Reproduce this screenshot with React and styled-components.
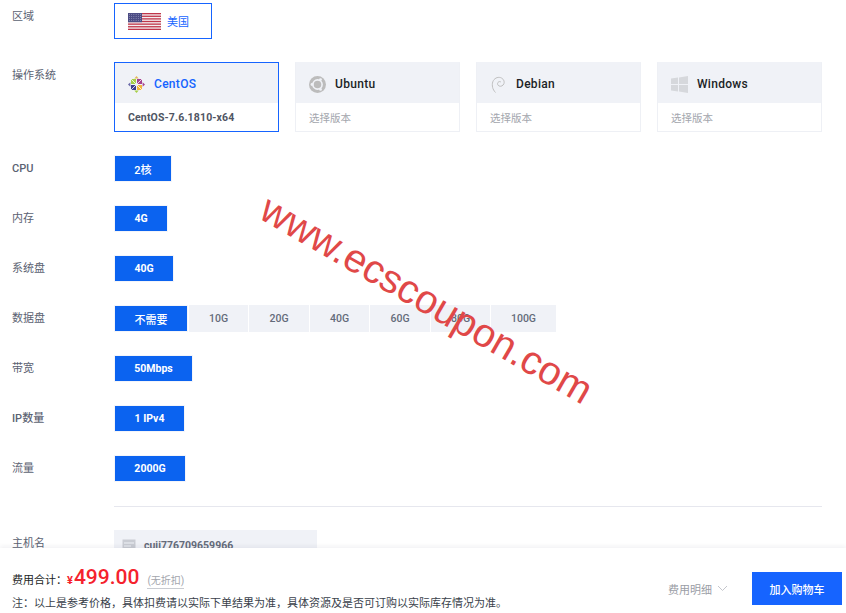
import React from "react";
import styled, { createGlobalStyle } from "styled-components";

const FONT = `Roboto, "Noto Sans CJK SC", sans-serif`;

const Global = createGlobalStyle`
  html, body { margin: 0; padding: 0; background: #fff; height: 613px; overflow: hidden; }
  * { box-sizing: border-box; }
  body { font-family: ${FONT}; }
`;

const Page = styled.div`
  position: relative;
  width: 846px;
  height: 613px;
  overflow: hidden;
  padding: 3px 24px 0 12px;
`;

const Row = styled.div`
  display: flex;
  align-items: flex-start;
  margin-bottom: ${(p) => p.$gap}px;
`;

const Label = styled.div`
  width: 102px;
  flex: none;
  padding-top: 6px;
  font-size: 11px;
  font-weight: ${(p) => (p.$latin ? 500 : 400)};
  line-height: 16px;
  color: #5b6272;
`;

const RegionButton = styled.div`
  width: 98px;
  height: 36px;
  border: 1px solid #1664ff;
  display: flex;
  align-items: center;
  padding-left: 13px;
  gap: 6px;
  color: #1664ff;
  font-size: 11px;
`;

const OsGrid = styled.div`
  display: flex;
  gap: 16px;
`;

const OsCard = styled.div`
  width: 165px;
  height: 70px;
  display: flex;
  flex-direction: column;
  border: 1px solid ${(p) => (p.$active ? "#1664ff" : "#eef0f5")};
  border-top-color: ${(p) => (p.$active ? "#1664ff" : "#f0f2f7")};
`;

const OsHead = styled.div`
  height: 40px;
  flex: none;
  background: #f0f2f7;
  display: flex;
  align-items: center;
  padding: 2px 0 0 13px;
  gap: 9px;
  font-size: 12px;
  font-weight: 500;
  letter-spacing: 0.3px;
  color: ${(p) => (p.$active ? "#1664ff" : "#1c1f26")};
`;

const OsIcon = styled.svg`
  width: 17px;
  height: 17px;
  flex: none;
`;

const OsVersion = styled.div`
  flex: 1;
  display: flex;
  align-items: center;
  padding: ${(p) => (p.$active ? "1px" : "0")} 0 0 13px;
  font-size: 10.5px;
  font-weight: ${(p) => (p.$active ? 700 : 400)};
  letter-spacing: ${(p) => (p.$active ? "0.15px" : "0")};
  color: ${(p) => (p.$active ? "#4f5563" : "#a3a6ad")};
`;

const Selected = styled.div`
  height: 27px;
  width: ${(p) => p.$w}px;
  border: 1px solid #f4f5f9;
  background: #0b63f0;
  background-clip: padding-box;
  color: #fff;
  font-size: ${(p) => (p.$cjk ? 11 : 10.5)}px;
  font-weight: ${(p) => (p.$cjk ? 500 : 700)};
  display: flex;
  align-items: center;
  justify-content: center;
`;

const Options = styled.div`
  display: flex;
  align-items: center;
  gap: 1px;
`;

const Option = styled.div`
  height: 27px;
  width: ${(p) => p.$w}px;
  background: #f0f2f7;
  color: #646b7a;
  font-size: 10.5px;
  font-weight: 500;
  display: flex;
  align-items: center;
  justify-content: center;
`;

const Divider = styled.div`
  height: 1px;
  margin: 0 0 23px 102px;
  background: #e6e7ee;
`;

const HostBox = styled.div`
  width: 203px;
  height: 40px;
  background: #f0f2f7;
  display: flex;
  align-items: center;
  padding: 0 0 9px 8px;
  gap: 8px;
  font-size: 10.5px;
  font-weight: 700;
  color: #646b7a;
`;

const Footer = styled.div`
  position: absolute;
  left: 0;
  right: 0;
  bottom: 0;
  height: 65px;
  background: #fff;
  box-shadow: 0 -2px 4px rgba(30, 40, 70, 0.06);
  display: flex;
  justify-content: space-between;
  padding: 0 4px 0 12px;
`;

const Summary = styled.div`
  display: flex;
  flex-direction: column;
  padding-top: 17px;
`;

const TotalLine = styled.div`
  display: flex;
  align-items: baseline;
  font-size: 11px;
  height: 24px;
  color: #1c1f26;
`;

const Currency = styled.span`
  color: #f5222d;
  font-size: 11px;
  font-weight: 700;
`;

const Amount = styled.span`
  color: #f5222d;
  font-size: 21px;
  font-weight: 500;
  margin: 0 8px 0 1px;
`;

const Discount = styled.span`
  color: #a3a6ad;
  font-size: 10px;
  border-bottom: 1px solid #c9ccd2;
  line-height: 14px;
`;

const Note = styled.div`
  font-size: 11px;
  line-height: 16px;
  margin-top: 7px;
  color: #3a3f4b;
  white-space: nowrap;
`;

const Actions = styled.div`
  display: flex;
  align-items: flex-start;
  padding-top: 24px;
`;

const Detail = styled.div`
  display: flex;
  align-items: center;
  gap: 5px;
  height: 33px;
  margin-right: 24px;
  font-size: 11px;
  color: #9a9da5;
`;

const CartButton = styled.div`
  width: 90px;
  height: 33px;
  background: #1664ff;
  color: #fff;
  font-size: 11px;
  font-weight: 500;
  display: flex;
  align-items: center;
  justify-content: center;
`;

const Watermark = styled.div`
  position: absolute;
  left: 239px;
  top: 276px;
  font-family: "Liberation Sans", Arial, sans-serif;
  font-size: 40px;
  line-height: 46px;
  color: #e04848;
  white-space: nowrap;
  transform: rotate(30deg);
  pointer-events: none;
`;

const Flag = () => (
  <svg width="33" height="17" viewBox="0 0 33 17">
    <rect width="33" height="17" fill="#f4f0f2" />
    {[0, 2.62, 5.24, 7.86, 10.48, 13.1, 15.7].map((y) => (
      <rect key={y} y={y} width="33" height="1.3" fill="#c0364a" />
    ))}
    <rect width="14" height="9.2" fill="#4c4c84" />
    {[1.5, 3.5, 5.5, 7.5].flatMap((y) =>
      [1.5, 3.7, 5.9, 8.1, 10.3, 12.5].map((x) => (
        <circle key={`${x}-${y}`} cx={x} cy={y} r="0.45" fill="#b9b9d4" />
      ))
    )}
  </svg>
);

const CentOSIcon = () => (
  <OsIcon viewBox="0 0 17 17">
    <rect x="3" y="3" width="5" height="5" fill="#a6cf47" />
    <rect x="9" y="3" width="5" height="5" fill="#a5438f" />
    <rect x="3" y="9" width="5" height="5" fill="#3f3f8c" />
    <rect x="9" y="9" width="5" height="5" fill="#f2b63c" />
    <path d="M8.5 0l2.2 2.4H6.3z" fill="#e5b85a" />
    <path d="M8.5 17l-2.2-2.4h4.4z" fill="#a6cf47" />
    <path d="M0 8.5l2.4-2.2v4.4z" fill="#6a6aa8" />
    <path d="M17 8.5l-2.4 2.2V6.3z" fill="#a5438f" />
    <path d="M3 3l5 5M14 3L9 8M3 14l5-5M14 14L9 9" stroke="#fff" strokeWidth="0.8" />
  </OsIcon>
);

const UbuntuIcon = () => (
  <OsIcon viewBox="0 0 17 17">
    <circle cx="8.5" cy="8.5" r="8.5" fill="#bcbcbc" />
    <circle cx="8.5" cy="8.5" r="4.6" fill="none" stroke="#f0f2f7" strokeWidth="1.6" />
    <circle cx="3" cy="8.5" r="1.4" fill="#f0f2f7" />
    <circle cx="11.5" cy="3.6" r="1.4" fill="#f0f2f7" />
    <circle cx="11.5" cy="13.4" r="1.4" fill="#f0f2f7" />
  </OsIcon>
);

const DebianIcon = () => (
  <OsIcon viewBox="0 0 17 17">
    <path
      d="M5.5 16.5C2.6 13.5 1.6 9.5 2.8 5.8 4 2.4 7.5.7 10.5 1.6c2.8.9 4.3 3.6 3.4 6.1-.7 2-3 3.1-4.8 2.3-1.5-.7-2-2.4-1.1-3.6.7-.9 2-1.1 2.9-.4"
      fill="none"
      stroke="#b9b9b9"
      strokeWidth="0.9"
    />
  </OsIcon>
);

const WindowsIcon = () => (
  <OsIcon viewBox="0 0 17 17">
    <path d="M0 2.6l7-1v6.4H0zM8 1.4L17 0v8H8zM0 9h7v6.4l-7-1zM8 9h9v8l-9-1.4z" fill="#d6d8dc" />
  </OsIcon>
);

const HostIcon = () => (
  <svg width="14" height="14" viewBox="0 0 14 14">
    <rect x="0.5" y="0.5" width="13" height="13" fill="#c9ccd3" />
    <path d="M2 4h10M2 7h7M2 10h10" stroke="#f0f2f7" strokeWidth="1.2" />
  </svg>
);

const Chevron = () => (
  <svg width="11" height="7" viewBox="0 0 11 7">
    <path d="M1 1l4.5 4.5L10 1" fill="none" stroke="#c4c6cc" strokeWidth="1" />
  </svg>
);

const systems = [
  { name: "CentOS", Icon: CentOSIcon, version: "CentOS-7.6.1810-x64", active: true },
  { name: "Ubuntu", Icon: UbuntuIcon, version: "选择版本" },
  { name: "Debian", Icon: DebianIcon, version: "选择版本" },
  { name: "Windows", Icon: WindowsIcon, version: "选择版本" },
];

const singles = [
  { label: "CPU", value: "2核", w: 58, latin: true, cjk: true },
  { label: "内存", value: "4G", w: 54 },
  { label: "系统盘", value: "40G", w: 60 },
];
const singlesAfter = [
  { label: "带宽", value: "50Mbps", w: 79 },
  { label: "IP数量", value: "1 IPv4", w: 71, latin: true },
  { label: "流量", value: "2000G", w: 72 },
];
const disks = [
  { value: "10G", w: 59 },
  { value: "20G", w: 60 },
  { value: "40G", w: 59 },
  { value: "60G", w: 60 },
  { value: "80G", w: 59 },
  { value: "100G", w: 65 },
];

export default function App() {
  return (
    <Page>
      <Global />
      <Row $gap={23}>
        <Label>区域</Label>
        <RegionButton>
          <Flag />
          <span>美国</span>
        </RegionButton>
      </Row>
      <Row $gap={23}>
        <Label>操作系统</Label>
        <OsGrid>
          {systems.map(({ name, Icon, version, active }) => (
            <OsCard key={name} $active={active}>
              <OsHead $active={active}>
                <Icon />
                {name}
              </OsHead>
              <OsVersion $active={active}>{version}</OsVersion>
            </OsCard>
          ))}
        </OsGrid>
      </Row>
      {singles.map((s) => (
        <Row $gap={23} key={s.label}>
          <Label $latin={s.latin}>{s.label}</Label>
          <Selected $w={s.w} $cjk={s.cjk}>
            {s.value}
          </Selected>
        </Row>
      ))}
      <Row $gap={23}>
        <Label>数据盘</Label>
        <Options>
          <Selected $w={74} $cjk>
            不需要
          </Selected>
          {disks.map((d) => (
            <Option key={d.value} $w={d.w}>
              {d.value}
            </Option>
          ))}
        </Options>
      </Row>
      {singlesAfter.map((s, i) => (
        <Row $gap={i === 2 ? 24 : 23} key={s.label}>
          <Label $latin={s.latin}>{s.label}</Label>
          <Selected $w={s.w}>{s.value}</Selected>
        </Row>
      ))}
      <Divider />
      <Row $gap={0}>
        <Label>主机名</Label>
        <HostBox>
          <HostIcon />
          cuii776709659966
        </HostBox>
      </Row>
      <Watermark>www.ecscoupon.com</Watermark>
      <Footer>
        <Summary>
          <TotalLine>
            费用合计：<Currency>¥</Currency>
            <Amount>499.00</Amount>
            <Discount>(无折扣)</Discount>
          </TotalLine>
          <Note>注：以上是参考价格，具体扣费请以实际下单结果为准，具体资源及是否可订购以实际库存情况为准。</Note>
        </Summary>
        <Actions>
          <Detail>
            费用明细
            <Chevron />
          </Detail>
          <CartButton>加入购物车</CartButton>
        </Actions>
      </Footer>
    </Page>
  );
}
